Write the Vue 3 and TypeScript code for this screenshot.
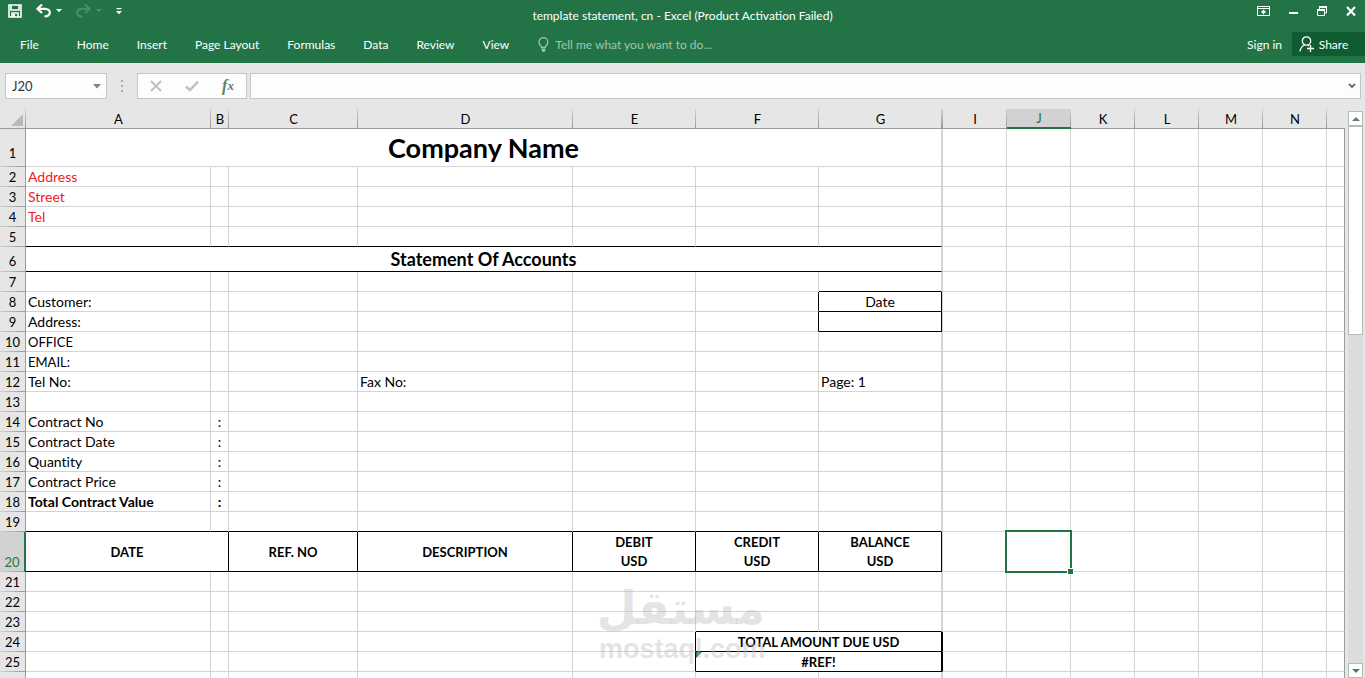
<script setup lang="ts">
import { ref } from 'vue'

interface Cell {
  text?: string
  span?: number
  cls?: string
  error?: boolean
}

interface Column {
  id: string
  label: string
}

const tabs: string[] = ['Home', 'Insert', 'Page Layout', 'Formulas', 'Data', 'Review', 'View']
const selectedColumn = 'J'
const selectedRow = 20
const lastNumberedRow = 25
const nameBox = ref<string>('J20')
const formula = ref<string>('')

const columns: Column[] = 'ABCDEFGHIJKLMNO'.split('').map((id) => ({
  id,
  label: id === 'H' || id === 'O' ? '' : id,
}))

const cells: Record<string, Cell> = {
  A1: { text: 'Company Name', span: 7, cls: 'company' },
  A2: { text: 'Address', cls: 'red' },
  A3: { text: 'Street', cls: 'red' },
  A4: { text: 'Tel', cls: 'red' },
  A6: { text: 'Statement Of Accounts', span: 7, cls: 'subtitle line-bottom' },
  A8: { text: 'Customer:' },
  G8: { text: 'Date', cls: 'center line-right line-bottom' },
  A9: { text: 'Address:' },
  G9: { cls: 'line-right line-bottom' },
  A10: { text: 'OFFICE', cls: 'caps' },
  A11: { text: 'EMAIL:', cls: 'caps' },
  A12: { text: 'Tel No:' },
  D12: { text: 'Fax No:' },
  G12: { text: 'Page: 1' },
  A14: { text: 'Contract No' },
  A15: { text: 'Contract Date' },
  A16: { text: 'Quantity' },
  A17: { text: 'Contract Price' },
  A18: { text: 'Total Contract Value', cls: 'bold' },
  B14: { text: ':', cls: 'center' },
  B15: { text: ':', cls: 'center' },
  B16: { text: ':', cls: 'center' },
  B17: { text: ':', cls: 'center' },
  B18: { text: ':', cls: 'center bold' },
  A20: { text: 'DATE', span: 2, cls: 'heading line-right line-bottom' },
  C20: { text: 'REF. NO', cls: 'heading line-right line-bottom' },
  D20: { text: 'DESCRIPTION', cls: 'heading line-right line-bottom' },
  E20: { text: 'DEBIT\nUSD', cls: 'heading line-right line-bottom' },
  F20: { text: 'CREDIT\nUSD', cls: 'heading line-right line-bottom' },
  G20: { text: 'BALANCE\nUSD', cls: 'heading line-right line-bottom' },
  G7: { cls: 'line-bottom' },
  F8: { cls: 'line-right' },
  F9: { cls: 'line-right' },
  F23: { cls: 'line-bottom' },
  G23: { cls: 'line-bottom' },
  E24: { cls: 'line-right' },
  E25: { cls: 'line-right' },
  F24: { text: 'TOTAL AMOUNT DUE USD', span: 2, cls: 'center bold caps line-right line-bottom' },
  F25: { text: '#REF!', span: 2, cls: 'center bold caps line-right line-bottom', error: true },
  H24: { cls: 'line-right' },
  H25: { cls: 'line-right' },
}

for (const id of 'ABCDEFG') {
  cells[`${id}5`] = { cls: 'line-bottom' }
  cells[`${id}19`] = { cls: 'line-bottom' }
}

interface PlacedCell extends Cell {
  id: string
  column: string
}

const rows = Array.from({ length: lastNumberedRow + 1 }, (_, index) => {
  const number = index + 1
  const placed: PlacedCell[] = []
  for (let c = 0; c < columns.length; ) {
    const column = columns[c].id
    const cell = cells[`${column}${number}`] ?? {}
    placed.push({ ...cell, id: `${column}${number}`, column })
    c += cell.span ?? 1
  }
  return { number, label: number > lastNumberedRow ? '' : String(number), placed }
})
</script>

<template>
  <div class="app">
    <header class="ribbon">
      <div class="titlebar">
        <div class="quick">
          <button aria-label="Save" class="save">
            <svg width="14" height="14" viewBox="0 0 14 14">
              <path d="M1 1H13V13H1Z M3 1V6H11V1 M4 13V9H10V13" fill="none" stroke="#fff" stroke-width="1.6" />
              <path d="M5 10H7V13H5Z" fill="#fff" />
            </svg>
          </button>
          <button aria-label="Undo" class="undo">
            <svg width="26" height="14" viewBox="0 0 26 14">
              <path d="M6 0.5L1.5 4.8L6 9M2 4.8H9C16 5 15 12.5 8.5 12.5" fill="none" stroke="#fff" stroke-width="2.2" />
              <path d="M20 5H26L23 8.2Z" fill="#fff" />
            </svg>
          </button>
          <button aria-label="Redo" class="redo">
            <svg width="26" height="14" viewBox="0 0 26 14">
              <path d="M9 0.5L13.5 4.8L9 9M13 4.8H6C-1 5 0 12.5 6.5 12.5" fill="none" stroke="#4f8f6c" stroke-width="2" />
              <path d="M20 5H26L23 8.2Z" fill="#4f8f6c" />
            </svg>
          </button>
          <button aria-label="Customize Quick Access Toolbar" class="customize">
            <svg width="6" height="7" viewBox="0 0 6 7">
              <path d="M0.5 0H5.5V1.2H0.5Z M0 3H6L3 6.2Z" fill="#fff" />
            </svg>
          </button>
        </div>
        <h1 class="title">template statement, cn - Excel (Product Activation Failed)</h1>
        <div class="window">
          <button aria-label="Ribbon Display Options">
            <svg width="13" height="11" viewBox="0 0 13 11">
              <path d="M0.5 0.5H12.5V9.5H0.5Z M0.5 2.5H12.5" fill="none" stroke="#fff" />
              <path d="M6.5 8.5V4.5M4.5 6.5L6.5 4.5L8.5 6.5" fill="none" stroke="#fff" stroke-width="1.3" />
            </svg>
          </button>
          <button aria-label="Minimize">
            <svg width="9" height="11" viewBox="0 0 9 11"><path d="M0 6H9V8H0Z" fill="#fff" /></svg>
          </button>
          <button aria-label="Restore">
            <svg width="10" height="11" viewBox="0 0 10 11">
              <path d="M2.5 3V1H9.5V7H8M0.5 4H7.5V9.5H0.5Z" fill="none" stroke="#fff" />
              <path d="M2 0H10V2H2Z M0 3H8V5H0Z" fill="#fff" />
            </svg>
          </button>
          <button aria-label="Close">
            <svg width="10" height="11" viewBox="0 0 10 11">
              <path d="M1 1L9 9.5M9 1L1 9.5" stroke="#fff" stroke-width="2.2" />
            </svg>
          </button>
        </div>
      </div>
      <nav class="tabs">
        <button class="tab file">File</button>
        <button v-for="tab in tabs" :key="tab" class="tab">{{ tab }}</button>
        <button class="tab tell">
          <svg width="11" height="15" viewBox="0 0 11 15" aria-hidden="true">
            <path d="M3.5 10.5C3.5 8.5 1 8 1 5A4.3 4.3 0 0 1 9.8 5C9.8 8 7.3 8.5 7.3 10.5Z M3.5 12.5H7.5M4 14H7" fill="none" stroke="#a3c4b0" stroke-width="1.3" />
          </svg>
          Tell me what you want to do...
        </button>
        <button class="tab signin">Sign in</button>
        <button class="share">
          <svg width="16" height="16" viewBox="0 0 16 16" aria-hidden="true">
            <circle cx="7.5" cy="5" r="4.2" fill="none" stroke="#fff" stroke-width="1.3" />
            <path d="M1 15.5C1.3 12 3 10.3 5.5 9M9 9L10 10M11.5 9V16M8 12.5H15" fill="none" stroke="#fff" stroke-width="1.3" />
          </svg>
          Share
        </button>
      </nav>
    </header>

    <div class="formula-bar">
      <div class="name-box">
        <input v-model="nameBox" aria-label="Name Box" />
        <button aria-label="Open Name Box">
          <svg width="8" height="5" viewBox="0 0 8 5"><path d="M0 0H8L4 4.5Z" fill="#77897f" /></svg>
        </button>
      </div>
      <span class="grip" aria-hidden="true"><i></i><i></i><i></i></span>
      <div class="actions">
        <button aria-label="Cancel">
          <svg width="12" height="12" viewBox="0 0 12 12"><path d="M1 1L11 11M11 1L1 11" stroke="#bfbfbf" stroke-width="1.8" /></svg>
        </button>
        <button aria-label="Enter">
          <svg width="14" height="12" viewBox="0 0 14 12"><path d="M1 6.5L5 10L13 1.5" fill="none" stroke="#bfbfbf" stroke-width="2.4" /></svg>
        </button>
        <button aria-label="Insert Function" class="fx">f<sub>x</sub></button>
      </div>
      <div class="formula">
        <input v-model="formula" aria-label="Formula Bar" />
        <button aria-label="Expand Formula Bar">
          <svg width="8" height="6" viewBox="0 0 8 6"><path d="M1 1L4 4L7 1" fill="none" stroke="#5f7168" stroke-width="1.8" /></svg>
        </button>
      </div>
    </div>

    <main class="workspace">
      <div class="sheet">
        <table>
          <colgroup>
            <col class="w-head" />
            <col v-for="column in columns" :key="column.id" :class="`w-${column.id}`" />
          </colgroup>
          <thead>
            <tr>
              <th class="corner">
                <svg width="12" height="12" viewBox="0 0 12 12" aria-hidden="true"><path d="M12 0V12H0Z" fill="#b3bcb6" /></svg>
              </th>
              <th
                v-for="column in columns"
                :key="column.id"
                scope="col"
                :class="{ active: column.id === selectedColumn, hidden: column.id === 'H', rest: column.id === 'O' }"
              >{{ column.label }}</th>
            </tr>
          </thead>
          <tbody>
            <tr v-for="row in rows" :key="row.number" :class="`row-${row.number}`">
              <th scope="row" :class="{ active: row.number === selectedRow }">{{ row.label }}</th>
              <td
                v-for="cell in row.placed"
                :key="cell.id"
                :colspan="cell.span"
                :class="[cell.cls, { hidden: cell.column === 'H', rest: cell.column === 'O', selected: cell.id === nameBox }]"
              >{{ cell.text }}<i v-if="cell.error" class="error-mark"></i></td>
            </tr>
          </tbody>
        </table>
        <div class="watermark">
          <span class="mark-ar" lang="ar" dir="rtl">مستقل</span>
          <span class="mark-en">mostaql.com</span>
        </div>
      </div>
      <div class="scrollbar">
        <button aria-label="Scroll up">
          <svg width="8" height="4" viewBox="0 0 8 4"><path d="M0 4L4 0L8 4Z" fill="#68796f" /></svg>
        </button>
        <div class="track"><div class="thumb"></div></div>
        <button aria-label="Scroll down">
          <svg width="8" height="4" viewBox="0 0 8 4"><path d="M0 0H8L4 4Z" fill="#4c8063" /></svg>
        </button>
      </div>
    </main>
  </div>
</template>

<style>
body {
  margin: 0;
  background: #e6e6e6;
}
</style>

<style scoped>
.app {
  display: flex;
  flex-direction: column;
  height: 100vh;
  overflow: hidden;
  background: #e6e6e6;
  color: #000;
  font-family: Lato, "Noto Sans", sans-serif;
  font-size: 13px;
}

button {
  display: flex;
  align-items: center;
  justify-content: center;
  margin: 0;
  padding: 0;
  border: 0;
  background: none;
  color: inherit;
  font: inherit;
  white-space: nowrap;
}

.ribbon {
  flex: none;
  height: 63px;
  background: #227447;
  color: #fff;
  font-size: 12px;
}

.titlebar {
  display: grid;
  grid-template-columns: 1fr auto 1fr;
  height: 32px;
}

.title {
  margin: 0;
  font-size: 12px;
  font-weight: 400;
  line-height: 32px;
}

.quick,
.window {
  display: flex;
  align-items: center;
  height: 22px;
}

.quick {
  gap: 14px;
  padding-left: 8px;
}

.window {
  justify-content: flex-end;
  gap: 19px;
  padding-right: 9px;
}

.tabs {
  display: flex;
  height: 24px;
}

.tab {
  padding: 0 14px;
}

.file {
  padding: 0 24px 0 20px;
}

.tell {
  gap: 6px;
  padding-left: 15px;
  color: #a3c4b0;
}

.signin {
  margin-left: auto;
  padding: 0 10px;
}

.share {
  gap: 4px;
  width: 73px;
  padding-right: 10px;
  background: #105c31;
}

.formula-bar {
  display: flex;
  flex: none;
  padding: 10px 4px 10px 5px;
}

.name-box,
.actions,
.formula {
  box-sizing: border-box;
  display: flex;
  height: 26px;
  border: 1px solid #c6c6c6;
  background: #fdfdfd;
}

input {
  box-sizing: border-box;
  flex: 1;
  min-width: 0;
  padding: 0 6px;
  border: 0;
  outline: 0;
  background: none;
  color: #333;
  font: inherit;
}

.name-box {
  width: 102px;
}

.name-box button {
  width: 19px;
}

.grip {
  display: flex;
  flex-direction: column;
  align-items: center;
  justify-content: center;
  gap: 3px;
  width: 30px;
}

.grip i {
  width: 2px;
  height: 2px;
  background: #a5aea9;
}

.actions {
  width: 110px;
  margin-right: 3px;
}

.actions button {
  flex: 1;
}

.fx {
  color: #5f7d6d;
  font-family: "Liberation Serif", serif;
  font-size: 16px;
  font-style: italic;
  font-weight: 700;
}

.fx sub {
  font-size: 13px;
}

.formula {
  flex: 1;
}

.formula button {
  width: 16px;
}

.workspace {
  display: flex;
  flex: 1;
  min-height: 0;
}

.sheet {
  position: relative;
  flex: 1;
  min-width: 0;
  overflow: hidden;
}

table {
  width: 100%;
  table-layout: fixed;
  border-collapse: separate;
  border-spacing: 0;
  font-size: 14px;
  font-variant-ligatures: none;
  line-height: 18px;
}

.w-head { width: 26px; }
.w-A { width: 185px; }
.w-B { width: 18px; }
.w-C { width: 129px; }
.w-D { width: 215px; }
.w-E,
.w-F,
.w-G { width: 123px; }
.w-H { width: 1px; }
.w-I,
.w-J,
.w-K,
.w-L,
.w-M,
.w-N { width: 64px; }

tr {
  height: 20px;
}

th,
td {
  box-sizing: border-box;
  padding: 0;
  white-space: pre;
}

th {
  font-size: 13px;
  font-weight: 400;
}

thead th {
  border-bottom: 1px solid #9b9b9b;
  background: linear-gradient(#d0d0d0, #959c98) right / 1px 100% no-repeat;
}

thead th.active {
  border-bottom: 2px solid #227447;
  background-color: #d2d2d2;
  color: #227447;
}

thead th.rest {
  background: none;
}

.corner svg {
  display: block;
  margin: 3px 3px 0 auto;
}

tbody th {
  padding-bottom: 1px;
  border-right: 1px solid #9b9b9b;
  background: linear-gradient(90deg, #d0d0d0, #959c98) bottom / 100% 1px no-repeat;
  vertical-align: bottom;
}

tbody th.active {
  border-right: 2px solid #227447;
  background-color: #d2d2d2;
  color: #227447;
}

td {
  padding: 0 2px;
  border-right: 1px solid #d4d4d4;
  border-bottom: 1px solid #d4d4d4;
  background: #fff;
  vertical-align: bottom;
}

.hidden {
  padding: 0;
}

td.rest {
  border-right-color: #9b9b9b;
}

.row-1 { height: 38px; }
.row-6 { height: 25px; }
.row-20 { height: 40px; }

.row-1 th {
  padding-bottom: 5px;
}

.row-6 th {
  padding-bottom: 2px;
}

.center,
.company,
.subtitle,
.heading {
  text-align: center;
}

.bold,
.company,
.subtitle,
.heading {
  font-weight: 700;
}

.red {
  color: #ed1c24;
}

.caps,
.heading {
  font-size: 13px;
}

.company {
  font-size: 27px;
  line-height: 36px;
}

.subtitle {
  font-size: 18px;
  line-height: 24px;
}

.heading {
  padding-top: 1px;
  line-height: 19px;
  vertical-align: middle;
}

.line-right {
  border-right-color: #000;
}

.line-bottom {
  border-bottom-color: #000;
}

.selected,
td:has(.error-mark) {
  position: relative;
}

.selected::before {
  content: "";
  position: absolute;
  inset: -2px;
  border: 2px solid #227447;
}

.selected::after {
  content: "";
  position: absolute;
  right: -4px;
  bottom: -4px;
  width: 5px;
  height: 5px;
  border: 1px solid #fff;
  background: #227447;
}

.error-mark {
  position: absolute;
  top: 0;
  left: 0;
  border-top: 6px solid #227447;
  border-right: 6px solid transparent;
}

.watermark {
  position: absolute;
  top: 472px;
  left: 599px;
  display: flex;
  flex-direction: column;
  width: 166px;
  color: rgb(190 190 190 / 42%);
  font-weight: 700;
  pointer-events: none;
}

.mark-ar {
  font-family: "DejaVu Sans", sans-serif;
  font-size: 46px;
  line-height: 54px;
}

.mark-en {
  font-family: "Liberation Sans", sans-serif;
  font-size: 27px;
  line-height: 28px;
}

.scrollbar {
  display: flex;
  flex-direction: column;
  flex: none;
  width: 15px;
  margin: 2px 2px 0 3px;
}

.scrollbar button {
  box-sizing: border-box;
  height: 15px;
  border: 1px solid #b3bcb6;
  background: #fff;
}

.track {
  flex: 1;
  background: #dcdcdc;
}

.thumb {
  box-sizing: border-box;
  height: 39%;
  border: 1px solid #b3bcb6;
  background: #fff;
}
</style>
